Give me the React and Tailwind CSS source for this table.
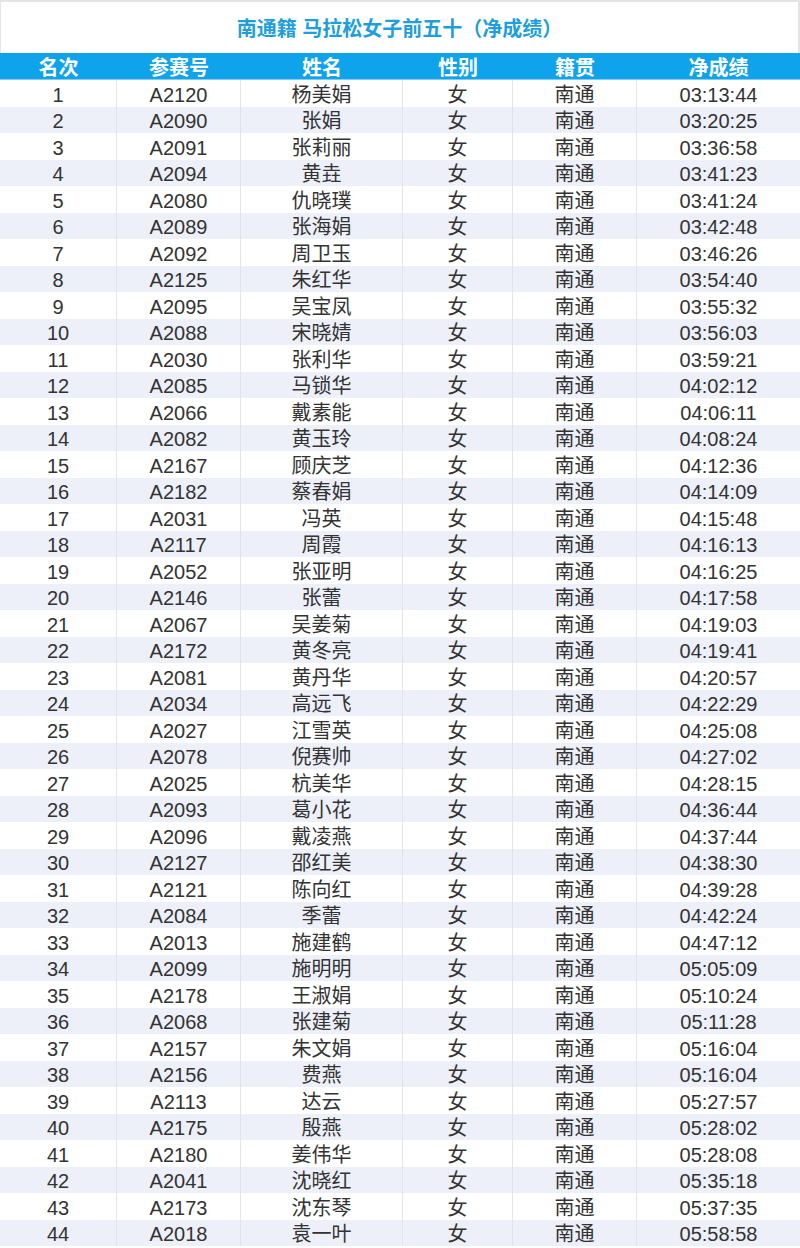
import React from 'react';

const rows = [
  ['A2120', '杨美娟', '03:13:44'],
  ['A2090', '张娟', '03:20:25'],
  ['A2091', '张莉丽', '03:36:58'],
  ['A2094', '黄垚', '03:41:23'],
  ['A2080', '仇晓璞', '03:41:24'],
  ['A2089', '张海娟', '03:42:48'],
  ['A2092', '周卫玉', '03:46:26'],
  ['A2125', '朱红华', '03:54:40'],
  ['A2095', '吴宝凤', '03:55:32'],
  ['A2088', '宋晓婧', '03:56:03'],
  ['A2030', '张利华', '03:59:21'],
  ['A2085', '马锁华', '04:02:12'],
  ['A2066', '戴素能', '04:06:11'],
  ['A2082', '黄玉玲', '04:08:24'],
  ['A2167', '顾庆芝', '04:12:36'],
  ['A2182', '蔡春娟', '04:14:09'],
  ['A2031', '冯英', '04:15:48'],
  ['A2117', '周霞', '04:16:13'],
  ['A2052', '张亚明', '04:16:25'],
  ['A2146', '张蕾', '04:17:58'],
  ['A2067', '吴姜菊', '04:19:03'],
  ['A2172', '黄冬亮', '04:19:41'],
  ['A2081', '黄丹华', '04:20:57'],
  ['A2034', '高远飞', '04:22:29'],
  ['A2027', '江雪英', '04:25:08'],
  ['A2078', '倪赛帅', '04:27:02'],
  ['A2025', '杭美华', '04:28:15'],
  ['A2093', '葛小花', '04:36:44'],
  ['A2096', '戴凌燕', '04:37:44'],
  ['A2127', '邵红美', '04:38:30'],
  ['A2121', '陈向红', '04:39:28'],
  ['A2084', '季蕾', '04:42:24'],
  ['A2013', '施建鹤', '04:47:12'],
  ['A2099', '施明明', '05:05:09'],
  ['A2178', '王淑娟', '05:10:24'],
  ['A2068', '张建菊', '05:11:28'],
  ['A2157', '朱文娟', '05:16:04'],
  ['A2156', '费燕', '05:16:04'],
  ['A2113', '达云', '05:27:57'],
  ['A2175', '殷燕', '05:28:02'],
  ['A2180', '姜伟华', '05:28:08'],
  ['A2041', '沈晓红', '05:35:18'],
  ['A2173', '沈东琴', '05:37:35'],
  ['A2018', '袁一叶', '05:58:58'],
];

const cols = 'grid grid-cols-[117px_124px_162px_110px_124px_163px]';
const headers = ['名次', '参赛号', '姓名', '性别', '籍贯', '净成绩'];

const App = () => {
  return (
    <div
      className="w-[800px] bg-white text-[20px] text-[#333]"
      style={{ fontFamily: '"Liberation Sans", "Noto Sans CJK SC", sans-serif' }}
    >
      <div className="h-[53px] flex items-center justify-center pt-[2px] border-t-2 border-l border-r-2 border-[#e4e4e4]">
        <h1 className="text-[20px] font-bold text-[#1e9fdc] leading-none">南通籍 马拉松女子前五十（净成绩）</h1>
      </div>
      <div className={`${cols} h-[27px] bg-[#0fa3ec] border-b border-[#7fcdf3] text-white font-bold`}>
        {headers.map(h => (
          <div key={h} className="flex items-center justify-center leading-none pt-[3px]">{h}</div>
        ))}
      </div>
      {rows.map((r, i) => {
        const cells = [String(i + 1), r[0], r[1], '女', '南通', r[2]];
        return (
          <div key={r[0]} className={`${cols} h-[26.5px] ${i % 2 ? 'bg-[#edf0f9]' : 'bg-white'}`}>
            {cells.map((c, j) => (
              <div
                key={j}
                className={`flex items-center justify-center leading-none pt-[3px] ${j < 5 ? 'border-r border-[#e2e4ea]' : ''}`}
              >
                {c}
              </div>
            ))}
          </div>
        );
      })}
    </div>
  );
};

export default App;
